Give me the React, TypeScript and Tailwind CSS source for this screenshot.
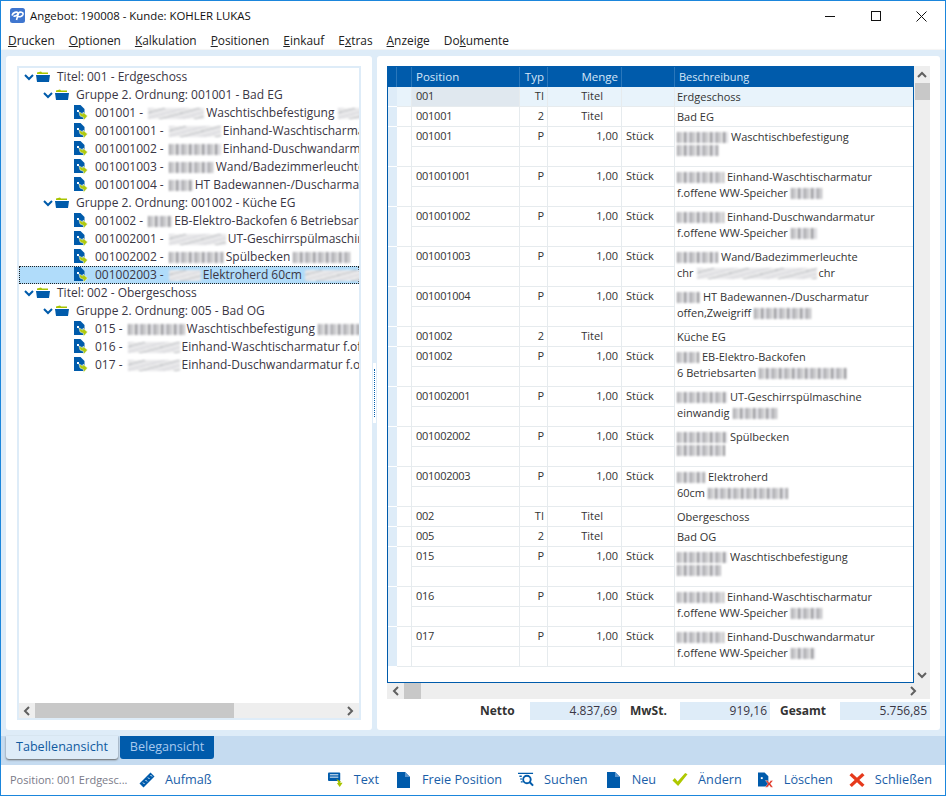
import type { ReactNode } from "react";

type Kind = "title" | "group" | "item";

type TreeRow = { kind: Kind; lead: string; blur?: number; soft?: boolean; text: string; tail?: number; selected?: boolean };

const treeRows: TreeRow[] = [
  { kind: "title", lead: "Titel: 001 - Erdgeschoss", text: "" },
  { kind: "group", lead: "Gruppe 2. Ordnung: 001001 - Bad EG", text: "" },
  { kind: "item", lead: "001001 -", blur: 56, soft: true, text: "Waschtischbefestigung", tail: 30 },
  { kind: "item", lead: "001001001 -", blur: 52, soft: true, text: "Einhand-Waschtischarmatur" },
  { kind: "item", lead: "001001002 -", blur: 52, text: "Einhand-Duschwandarmatur" },
  { kind: "item", lead: "001001003 -", blur: 45, text: "Wand/Badezimmerleuchte" },
  { kind: "item", lead: "001001004 -", blur: 24, text: "HT Badewannen-/Duscharmatur" },
  { kind: "group", lead: "Gruppe 2. Ordnung: 001002 - Küche EG", text: "" },
  { kind: "item", lead: "001002 -", blur: 24, text: "EB-Elektro-Backofen 6 Betriebsarten" },
  { kind: "item", lead: "001002001 -", blur: 57, soft: true, text: "UT-Geschirrspülmaschine" },
  { kind: "item", lead: "001002002 -", blur: 55, text: "Spülbecken", tail: 58 },
  { kind: "item", lead: "001002003 -", blur: 32, soft: true, text: "Elektroherd 60cm", tail: 60, selected: true },
  { kind: "title", lead: "Titel: 002 - Obergeschoss", text: "" },
  { kind: "group", lead: "Gruppe 2. Ordnung: 005 - Bad OG", text: "" },
  { kind: "item", lead: "015 -", blur: 57, text: "Waschtischbefestigung", tail: 45 },
  { kind: "item", lead: "016 -", blur: 52, soft: true, text: "Einhand-Waschtischarmatur f.offene" },
  { kind: "item", lead: "017 -", blur: 52, soft: true, text: "Einhand-Duschwandarmatur f.offene" },
];

type GridRow = {
  pos: string;
  typ: string;
  menge?: string;
  line1: string;
  line1Blur?: number;
  line2?: string;
  line2Blur?: number;
  line2Soft?: boolean;
  line2Tail?: string;
};

const gridRows: GridRow[] = [
  { pos: "001", typ: "TI", menge: "Titel", line1: "Erdgeschoss" },
  { pos: "001001", typ: "2", menge: "Titel", line1: "Bad EG" },
  { pos: "001001", typ: "P", line1: "Waschtischbefestigung", line1Blur: 51, line2: "", line2Blur: 42 },
  { pos: "001001001", typ: "P", line1: "Einhand-Waschtischarmatur", line1Blur: 47, line2: "f.offene WW-Speicher", line2Blur: 32 },
  { pos: "001001002", typ: "P", line1: "Einhand-Duschwandarmatur", line1Blur: 47, line2: "f.offene WW-Speicher", line2Blur: 26 },
  { pos: "001001003", typ: "P", line1: "Wand/Badezimmerleuchte", line1Blur: 41, line2: "chr", line2Blur: 120, line2Soft: true, line2Tail: "chr" },
  { pos: "001001004", typ: "P", line1: "HT Badewannen-/Duscharmatur", line1Blur: 23, line2: "offen,Zweigriff", line2Blur: 58 },
  { pos: "001002", typ: "2", menge: "Titel", line1: "Küche EG" },
  { pos: "001002", typ: "P", line1: "EB-Elektro-Backofen", line1Blur: 22, line2: "6 Betriebsarten", line2Blur: 88 },
  { pos: "001002001", typ: "P", line1: "UT-Geschirrspülmaschine", line1Blur: 50, line2: "einwandig", line2Blur: 45 },
  { pos: "001002002", typ: "P", line1: "Spülbecken", line1Blur: 50, line2: "", line2Blur: 48 },
  { pos: "001002003", typ: "P", line1: "Elektroherd", line1Blur: 28, line2: "60cm", line2Blur: 80 },
  { pos: "002", typ: "TI", menge: "Titel", line1: "Obergeschoss" },
  { pos: "005", typ: "2", menge: "Titel", line1: "Bad OG" },
  { pos: "015", typ: "P", line1: "Waschtischbefestigung", line1Blur: 50, line2: "", line2Blur: 44 },
  { pos: "016", typ: "P", line1: "Einhand-Waschtischarmatur", line1Blur: 47, line2: "f.offene WW-Speicher", line2Blur: 32 },
  { pos: "017", typ: "P", line1: "Einhand-Duschwandarmatur", line1Blur: 47, line2: "f.offene WW-Speicher", line2Blur: 24 },
];

// Stands in for the text that is pixelated in the screenshot
function Smudge({ width, soft }: { width: number; soft?: boolean }) {
  return (
    <span
      style={{ width }}
      className={
        soft
          ? "inline-block h-[11px] shrink-0 align-middle blur-[0.8px] bg-[repeating-linear-gradient(165deg,#dcdce0_0,#dcdce0_2px,#f2f2f2_2px,#f2f2f2_4px,#b4b6ba_4px,#b4b6ba_5px,#e8e8ea_5px,#e8e8ea_9px)]"
          : "inline-block h-[11px] shrink-0 align-middle blur-[0.8px] bg-[repeating-linear-gradient(90deg,#a0a0a4_0,#a0a0a4_2px,#e8e8ea_2px,#e8e8ea_3px,#c0c0c4_3px,#c0c0c4_5px,#f0f0f0_5px,#f0f0f0_7px,#8e8e92_7px,#8e8e92_9px,#dcdce0_9px,#dcdce0_13px)]"
      }
    />
  );
}

function Chevron({ dir, color }: { dir: "up" | "down" | "left" | "right"; color?: string }) {
  const d = {
    up: "M1 7 L5 3 L9 7",
    down: "M1 3 L5 7 L9 3",
    left: "M7 1 L3 5 L7 9",
    right: "M3 1 L7 5 L3 9",
  }[dir];
  return (
    <svg width="10" height="10" viewBox="0 0 10 10" className="shrink-0">
      <path d={d} fill="none" stroke={color ?? "#606060"} strokeWidth="2" />
    </svg>
  );
}

function FolderIcon() {
  return (
    <svg width="14" height="12" viewBox="0 0 14 12" className="shrink-0">
      <path d="M1 3 L1 1.5 L5 0.5 L6 1.5 L12 1.5 L12 3 Z" fill="#a8c400" />
      <path d="M0 4 L14 4 L13 11 L1 11 Z" fill="#005bab" />
    </svg>
  );
}

function DocBadgeIcon() {
  return (
    <svg width="14" height="16" viewBox="0 0 14 16" className="shrink-0">
      <path d="M0 0 L6.5 0 L10.5 4 L10.5 14 L0 14 Z" fill="#005bab" />
      <path d="M3 5 L5 5 L5 7 L3 7 Z" fill="#fff" />
      <path d="M5 7 L9 9 L9 7 L13.5 11 L9.5 15.5 L9.5 12.5 L6 11 Z" fill="#b0ca10" stroke="#fff" strokeWidth="0.5" />
    </svg>
  );
}

function TreeLine({ row }: { row: TreeRow }) {
  const indent = row.kind === "title" ? "pl-[5px]" : row.kind === "group" ? "pl-[24px]" : "pl-[55px]";
  return (
    <div
      className={`flex h-[18px] items-center whitespace-nowrap overflow-hidden ${indent} ${
        row.selected ? "bg-[#b0dcfa] outline outline-1 -outline-offset-1 outline-dotted outline-[#222]" : ""
      }`}
    >
      {row.kind !== "item" ? (
        <>
          <span className="mr-[2px]">
            <Chevron dir="down" color="#005bab" />
          </span>
          <FolderIcon />
          <span className="ml-[7px]">{row.lead}</span>
        </>
      ) : (
        <>
          <DocBadgeIcon />
          <span className="ml-[7px]">{row.lead}</span>
          <span className="ml-[5px] mr-[1px] flex">
            <Smudge width={row.blur ?? 0} soft={row.soft} />
          </span>
          <span className="ml-[1px]">{row.text}</span>
          {row.tail ? (
            <span className="ml-[3px] flex">
              <Smudge width={row.tail} soft={row.soft} />
            </span>
          ) : null}
        </>
      )}
    </div>
  );
}

function GridLine({ row, index }: { row: GridRow; index: number }) {
  const isLong = row.line2 !== undefined;
  const cell = "flex h-[20px] items-center border-b border-r border-[#e6ebee]";
  const tone = index === 0 ? "bg-[#e8f3fb]" : "bg-white";
  return (
    <div className={`flex ${tone} ${isLong ? "h-[40px]" : "h-[20px]"}`}>
      <div className="w-[9px] shrink-0 bg-[#deecf8] border-b border-white" />
      <div className="w-[15px] shrink-0 border-r border-b border-[#e6ebee]" />
      <div className="w-[263px] shrink-0">
        <div className="flex">
          <div className={`${cell} w-[108px] pl-[4px] tracking-[-0.25px] ${index === 0 ? "bg-[#e0e8ef]" : ""}`}>{row.pos}</div>
          <div className={`${cell} w-[28px] justify-end pr-[3px]`}>{row.typ}</div>
          <div className={`${cell} w-[74px] justify-end ${row.menge ? "pr-[18px]" : "pr-[3px]"}`}>
            {row.menge ?? "1,00"}
          </div>
          <div className={`${cell} w-[53px] pl-[4px]`}>{row.menge ? "" : "Stück"}</div>
        </div>
        {isLong ? (
          <div className="flex">
            <div className={`${cell} w-[108px]`} />
            <div className={`${cell} w-[28px]`} />
            <div className={`${cell} w-[74px]`} />
            <div className={`${cell} w-[53px]`} />
          </div>
        ) : null}
      </div>
      <div className="min-w-0 flex-1 border-b border-[#e6ebee] pl-[2px] pt-[2px] leading-[16px] whitespace-nowrap overflow-hidden">
        <div className="flex items-center">
          {row.line1Blur ? <Smudge width={row.line1Blur} /> : null}
          <span className={row.line1Blur ? "ml-[3px]" : ""}>{row.line1}</span>
        </div>
        {isLong ? (
          <div className="flex items-center">
            {row.line2 ? <span>{row.line2}</span> : null}
            {row.line2Blur ? (
              <span className={row.line2 ? "ml-[3px] flex" : "flex"}>
                <Smudge width={row.line2Blur} soft={row.line2Soft} />
              </span>
            ) : null}
            {row.line2Tail ? <span className="ml-[2px]">{row.line2Tail}</span> : null}
          </div>
        ) : null}
      </div>
    </div>
  );
}

function Menu({ first, mark, rest }: { first?: string; mark: string; rest: string }) {
  return (
    <span>
      {first}
      <span className="underline">{mark}</span>
      {rest}
    </span>
  );
}

function Tool({ icon, label, extra }: { icon: ReactNode; label: string; extra?: string }) {
  return (
    <div className={`flex items-center gap-[10px] ${extra ?? ""}`}>
      <span className="flex w-[16px] justify-center">{icon}</span>
      <span>{label}</span>
    </div>
  );
}

function Total({ label, value, width }: { label: string; value: string; width: string }) {
  return (
    <div className="flex items-center">
      <span className={`${width} font-bold text-[#333]`}>{label}</span>
      <span className="flex h-[18px] w-[90px] items-center justify-end bg-[#deecf8] pr-[3px]">{value}</span>
    </div>
  );
}

export default function App() {
  return (
    <div className="flex h-[796px] w-[946px] flex-col overflow-hidden border border-[#1b86dc] bg-white font-['Open_Sans',sans-serif] text-[12px] text-[#3a3644]">
      {/* Title bar */}
      <div className="flex h-[30px] shrink-0 items-center justify-between pl-[9px] text-[#111]">
        <div className="flex items-center gap-[5px]">
          <svg width="15" height="15" viewBox="0 0 15 15" className="shrink-0">
            <rect width="15" height="15" rx="2.5" fill="#3f76cf" />
            <path d="M2 7.5 C3 4 7 3.5 8 5 C8.5 7 5 8.5 3.5 8" fill="none" stroke="#fff" strokeWidth="1.6" />
            <path d="M6.5 12 L8.5 5 C10 3.5 13.5 4 13 6.5 C12.5 8.5 9.5 9 8 8.5" fill="none" stroke="#fff" strokeWidth="1.6" />
          </svg>
          <span className="text-[11.4px]">Angebot: 190008 - Kunde: KOHLER LUKAS</span>
        </div>
        <div className="flex items-center">
          <div className="flex h-[30px] w-[46px] items-center justify-center">
            <svg width="10" height="10" viewBox="0 0 10 10">
              <path d="M0 5.5 H10" stroke="#111" strokeWidth="1" />
            </svg>
          </div>
          <div className="flex h-[30px] w-[46px] items-center justify-center">
            <svg width="10" height="10" viewBox="0 0 10 10">
              <rect x="0.5" y="0.5" width="9" height="9" fill="none" stroke="#111" strokeWidth="1" />
            </svg>
          </div>
          <div className="flex h-[30px] w-[46px] items-center justify-center pr-[2px]">
            <svg width="11" height="11" viewBox="0 0 11 11">
              <path d="M0.5 0.5 L10.5 10.5 M10.5 0.5 L0.5 10.5" stroke="#111" strokeWidth="1" />
            </svg>
          </div>
        </div>
      </div>

      {/* Menu */}
      <div className="flex h-[19px] shrink-0 items-center gap-[14px] pl-[7px] text-[11.9px] text-[#222]">
        <Menu mark="D" rest="rucken" />
        <Menu mark="O" rest="ptionen" />
        <Menu mark="K" rest="alkulation" />
        <Menu mark="P" rest="ositionen" />
        <Menu mark="E" rest="inkauf" />
        <Menu first="E" mark="x" rest="tras" />
        <Menu mark="A" rest="nzeige" />
        <Menu first="Do" mark="k" rest="umente" />
      </div>

      {/* Body */}
      <div className="flex h-[686px] shrink-0 items-stretch bg-[#deecf8] px-[5px] pt-[6px] pb-[6px] shadow-[0_1px_2px_#777]">
        {/* Tree panel */}
        <div className="flex w-[366px] shrink-0 flex-col rounded-[3px] bg-white px-[11px] py-[10px]">
          <div className="flex min-h-0 flex-1 flex-col border-2 border-[#deecf8]">
            <div className="min-h-0 flex-1 overflow-hidden">
              {treeRows.map((row, i) => (
                <TreeLine key={i} row={row} />
              ))}
            </div>
            <div className="flex h-[15px] shrink-0 items-center bg-[#eeeeee]">
              <div className="flex w-[16px] justify-center">
                <Chevron dir="left" />
              </div>
              <div className="h-[15px] w-[199px] bg-[#c8c8c8]" />
              <div className="flex-1" />
              <div className="flex w-[18px] justify-center">
                <Chevron dir="right" />
              </div>
            </div>
          </div>
        </div>

        {/* Splitter */}
        <div className="flex w-[5px] shrink-0 items-center justify-center">
          <div className="flex h-[60px] w-[3px] items-center justify-center bg-white">
            <div className="h-[48px] border-l-[1.5px] border-dotted border-[#005bab]" />
          </div>
        </div>

        {/* Grid panel */}
        <div className="flex min-w-0 flex-1 flex-col rounded-[3px] bg-white pl-[10px] pr-[10px] pt-[10px]">
          <div className="flex h-[617px] shrink-0">
            <div className="flex w-[527px] shrink-0 flex-col overflow-hidden border border-[#005bab] text-[11px] text-[#333]">
              <div className="flex h-[20px] shrink-0 items-center bg-[#005bab] text-[11.5px] text-[#d5e6f8]">
                <div className="w-[9px] h-full border-r border-[#2a77bb]" />
                <div className="w-[15px] h-full border-r border-[#2a77bb]" />
                <div className="flex h-full w-[108px] items-center border-r border-[#2a77bb] pl-[4px]">Position</div>
                <div className="flex h-full w-[28px] items-center justify-end border-r border-[#2a77bb] pr-[3px]">Typ</div>
                <div className="flex h-full w-[74px] items-center justify-end border-r border-[#2a77bb] pr-[3px]">Menge</div>
                <div className="h-full w-[53px] border-r border-[#2a77bb]" />
                <div className="pl-[4px] text-[11px]">Beschreibung</div>
              </div>
              <div className="min-h-0 flex-1 overflow-hidden">
                {gridRows.map((row, i) => (
                  <GridLine key={i} row={row} index={i} />
                ))}
              </div>
            </div>
            <div className="flex w-[16px] shrink-0 flex-col items-center bg-[#eeeeee]">
              <div className="flex h-[17px] items-center">
                <Chevron dir="up" />
              </div>
              <div className="h-[17px] w-[15px] bg-[#c8c8c8]" />
              <div className="flex-1" />
              <div className="flex h-[17px] items-center">
                <Chevron dir="down" />
              </div>
            </div>
          </div>
          <div className="flex h-[16px] shrink-0 items-center bg-[#eeeeee]">
            <div className="flex w-[17px] justify-center">
              <Chevron dir="left" />
            </div>
            <div className="h-[16px] w-[17px] bg-[#c8c8c8]" />
            <div className="flex-1" />
            <div className="flex w-[26px] justify-start pl-[4px]">
              <Chevron dir="right" />
            </div>
          </div>
          <div className="mt-[3px] flex justify-end gap-[10px]">
            <Total label="Netto" value="4.837,69" width="w-[50px]" />
            <Total label="MwSt." value="919,16" width="w-[50px]" />
            <Total label="Gesamt" value="5.756,85" width="w-[60px]" />
          </div>
        </div>
      </div>

      {/* Tabs */}
      <div className="flex h-[29px] shrink-0 items-start gap-[2px] bg-[#c5dbf0] pl-[5px] text-[12.6px]">
        <div className="flex h-[23px] w-[112px] items-center justify-center rounded-b-[3px] bg-[#deecf8] text-[#105aa0] shadow-[0_1px_2px_#666]">
          Tabellenansicht
        </div>
        <div className="flex h-[23px] w-[94px] items-center justify-center rounded-b-[3px] bg-[#005bab] text-[#a9c9ee]">
          Belegansicht
        </div>
      </div>

      {/* Bottom toolbar */}
      <div className="flex min-h-0 flex-1 items-center justify-between pl-[9px] pr-[13px] text-[12.7px] text-[#1a5ea8]">
        <div className="flex items-center">
          <span className="w-[129px] text-[11px] text-[#7a7a88]">Position: 001 Erdgesc...</span>
          <Tool
            label="Aufmaß"
            icon={
              <svg width="16" height="16" viewBox="0 0 16 16">
                <path d="M0.5 11.5 L11.5 0.5 L15.5 4.5 L4.5 15.5 Z" fill="#005bab" />
                <path d="M4 10.5 L5.5 12 M6.5 8 L8 9.5 M9 5.5 L10.5 7 M11.5 3 L13 4.5" stroke="#fff" strokeWidth="1" />
              </svg>
            }
          />
        </div>
        <div className="flex items-center gap-[16px]">
          <Tool
            label="Text"
            extra="mr-[1px]"
            icon={
              <svg width="17" height="17" viewBox="0 0 17 17">
                <rect x="0" y="1" width="13" height="9" rx="1" fill="#005bab" />
                <path d="M2 3.5 H11 M2 6 H11" stroke="#fff" strokeWidth="1" />
                <path d="M9 8 L14 11 L12.5 12 L15.5 12 L12.5 16.5 L9.5 12.5 L11 12 Z" fill="#a8c400" />
              </svg>
            }
          />
          <Tool
            label="Freie Position"
            icon={
              <svg width="15" height="16" viewBox="0 0 15 16">
                <path d="M1 0 L9 0 L14 5 L14 16 L1 16 Z" fill="#005bab" />
                <path d="M9 0 L14 5 L9 5 Z" fill="#5c95cc" />
              </svg>
            }
          />
          <Tool
            label="Suchen"
            extra="mr-[2px]"
            icon={
              <svg width="17" height="15" viewBox="0 0 17 15">
                <path d="M0 1 H16 M1.5 4 H4 M2.5 7 H4 M3 10 H5" stroke="#005bab" strokeWidth="1.5" fill="none" />
                <circle cx="9.5" cy="7.5" r="4" fill="none" stroke="#005bab" strokeWidth="2" />
                <path d="M12.5 10.5 L16 14" stroke="#005bab" strokeWidth="2.2" />
              </svg>
            }
          />
          <Tool
            label="Neu"
            icon={
              <svg width="15" height="16" viewBox="0 0 15 16">
                <path d="M1 0 L9 0 L14 5 L14 16 L1 16 Z" fill="#005bab" />
                <path d="M9 0 L14 5 L9 5 Z" fill="#5c95cc" />
              </svg>
            }
          />
          <Tool
            label="Ändern"
            icon={
              <svg width="17" height="15" viewBox="0 0 17 15">
                <path d="M0.5 8.5 L3 6 L6 9.5 L14 0.5 L16.5 2 L6.5 14.5 Z" fill="#aec800" />
              </svg>
            }
          />
          <Tool
            label="Löschen"
            icon={
              <svg width="17" height="16" viewBox="0 0 17 16">
                <path d="M0 0 L7 0 L11 4 L11 15 L0 15 Z" fill="#005bab" />
                <path d="M3 5 L5 5 L5 7 L3 7 Z" fill="#fff" />
                <path d="M8 8.5 L10 8.5 L11.8 10.8 L13.6 8.5 L16 8.5 L13.2 12 L16 15.7 L13.6 15.7 L11.8 13.2 L10 15.7 L7.7 15.7 L10.5 12 Z" fill="#e0301e" stroke="#fff" strokeWidth="0.4" />
              </svg>
            }
          />
          <Tool
            label="Schließen"
            icon={
              <svg width="17" height="16" viewBox="0 0 17 16">
                <path d="M0.5 3 L3 0.5 L8.5 5.5 L14 0.5 L16.5 3 L11 8 L16.5 13 L14 15.5 L8.5 10.5 L3 15.5 L0.5 13 L6 8 Z" fill="#e63a1c" />
              </svg>
            }
          />
        </div>
      </div>
    </div>
  );
}
